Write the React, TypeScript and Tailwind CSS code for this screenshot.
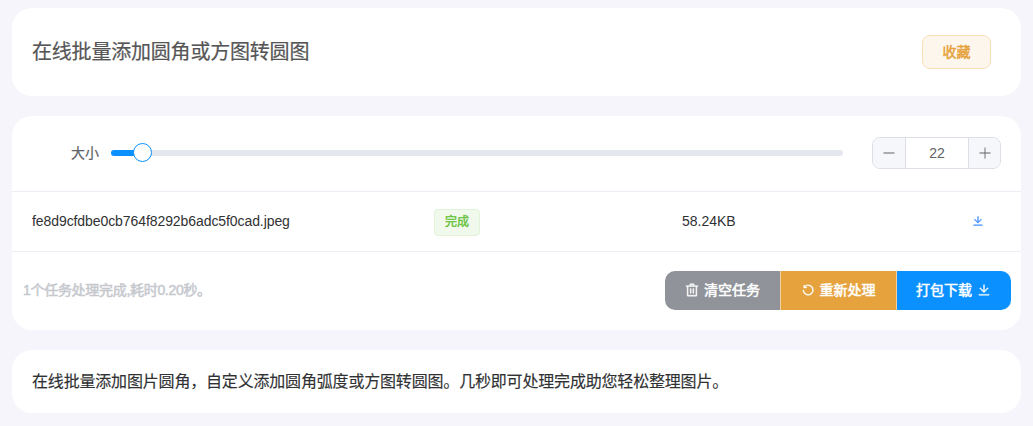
const fontStack = '[font-family:"Liberation_Sans","Noto_Sans_CJK_SC",sans-serif]';

function DownloadIcon({ className }: { className: string }) {
  return (
    <svg viewBox="0 0 1024 1024" fill="currentColor" stroke="currentColor" strokeWidth="36" className={className}>
      <path d="M160 832h704a32 32 0 1 1 0 64H160a32 32 0 1 1 0-64m384-253.696 236.288-236.352 45.248 45.248L508.8 704 192 387.2l45.248-45.248L480 584.704V128h64z" />
    </svg>
  );
}

function DeleteIcon({ className }: { className: string }) {
  return (
    <svg viewBox="0 0 1024 1024" fill="currentColor" stroke="currentColor" strokeWidth="36" className={className}>
      <path d="M160 256H96a32 32 0 0 1 0-64h256V95.936a32 32 0 0 1 32-32h256a32 32 0 0 1 32 32V192h256a32 32 0 1 1 0 64h-64v672a32 32 0 0 1-32 32H192a32 32 0 0 1-32-32zm448-64v-64H416v64zM224 896h576V256H224zm192-128a32 32 0 0 1-32-32V416a32 32 0 0 1 64 0v320a32 32 0 0 1-32 32m192 0a32 32 0 0 1-32-32V416a32 32 0 0 1 64 0v320a32 32 0 0 1-32 32" />
    </svg>
  );
}

function RefreshIcon({ className }: { className: string }) {
  return (
    <svg viewBox="0 0 1024 1024" fill="currentColor" stroke="currentColor" strokeWidth="36" className={className}>
      <path d="M289.088 296.704h92.992a32 32 0 0 1 0 64H232.96a32 32 0 0 1-32-32V179.712a32 32 0 0 1 64 0v50.56a384 384 0 0 1 643.84 282.88 384 384 0 0 1-383.936 384 384 384 0 0 1-384-384h64a320 320 0 1 0 640 0 320 320 0 0 0-555.712-216.448z" />
    </svg>
  );
}

function MinusIcon() {
  return (
    <svg viewBox="0 0 1024 1024" fill="currentColor" className="w-[14px] h-[14px]">
      <path d="M128 544h768a32 32 0 1 0 0-64H128a32 32 0 0 0 0 64" />
    </svg>
  );
}

function PlusIcon() {
  return (
    <svg viewBox="0 0 1024 1024" fill="currentColor" className="w-[14px] h-[14px]">
      <path d="M480 480V128a32 32 0 0 1 64 0v352h352a32 32 0 1 1 0 64H544v352a32 32 0 1 1-64 0V544H128a32 32 0 0 1 0-64z" />
    </svg>
  );
}

export default function App() {
  return (
    <div className={`${fontStack} min-h-[426px] bg-[#f5f5fb] px-3 pt-2 flex flex-col gap-5`}>

      {/* TITLE */}
      <header className="h-[88px] bg-white rounded-[20px] pl-5 pr-[30px] flex items-center justify-between">
        <h1 className="text-xl tracking-[-0.2px] [-webkit-text-stroke:0.2px_currentColor] text-[#555555]">在线批量添加圆角或方图转圆图</h1>
        <button className="w-[69px] h-[34px] rounded-lg border border-[#f8dfb8] bg-[#fdf6ec] text-sm [-webkit-text-stroke:0.5px_currentColor] text-[#e6a23c] flex items-center justify-center">
          收藏
        </button>
      </header>

      {/* TOOL */}
      <section className="h-[214px] bg-white rounded-[20px] flex flex-col">
        <div className="h-[76px] border-b border-[#ebeef5] flex items-center pl-[59px] pr-5 pb-[2px]">
          <span className="w-10 text-sm [-webkit-text-stroke:0.2px_currentColor] text-[#606266]">大小</span>
          <div className="w-[732px] h-[6px] rounded-full bg-[#e4e7ed] relative">
            <div className="w-[31px] h-[6px] rounded-l-full bg-[#0a90ff]" />
            <div className="absolute left-[22px] -top-[7px] w-[19px] h-[19px] rounded-full border border-[#0a90ff] bg-white" />
          </div>
          <div className="ml-[29px] w-[129px] h-8 rounded-lg border border-[#dcdfe6] flex items-stretch overflow-hidden text-[#606266]">
            <div className="w-[33px] bg-[#f5f7fa] border-r border-[#dcdfe6] flex items-center justify-center">
              <MinusIcon />
            </div>
            <div className="flex-1 flex items-center justify-center text-sm">22</div>
            <div className="w-[32px] bg-[#f5f7fa] border-l border-[#dcdfe6] flex items-center justify-center">
              <PlusIcon />
            </div>
          </div>
        </div>

        <div className="h-[60px] border-b border-[#ebeef5] grid grid-cols-[402px_248px_1fr_auto] items-center pl-5 pr-[37px] text-sm text-[#303133]">
          <span className="-mt-[2px] tracking-[-0.08px] whitespace-nowrap">fe8d9cfdbe0cb764f8292b6adc5f0cad.jpeg</span>
          <span className="w-[46px] h-[27px] mt-[1px] rounded-[4px] border border-[#e1f3d8] bg-[#f0f9eb] text-xs [-webkit-text-stroke:0.4px_currentColor] text-[#67c23a] flex items-center justify-center">
            完成
          </span>
          <span className="-mt-[2px]">58.24KB</span>
          <DownloadIcon className="w-3 h-3 text-[#3f8cff] -mt-[2px]" />
        </div>

        <div className="flex-1 flex items-center justify-between pl-[11px] pr-[10px] pb-[2px]">
          <span className="text-sm tracking-[-0.3px] [-webkit-text-stroke:0.5px_currentColor] text-[#c6c8ce]">1个任务处理完成,耗时0.20秒。</span>
          <div className="flex h-[39px] text-sm [-webkit-text-stroke:0.5px_currentColor] text-white">
            <button className="w-[115px] rounded-l-[10px] bg-[#909399] flex items-center justify-center gap-[5px]">
              <DeleteIcon className="w-[14px] h-[14px]" />
              清空任务
            </button>
            <button className="w-[116px] pr-[1px] border-l border-[#f3d19e] bg-[#e6a23c] flex items-center justify-center gap-[5px]">
              <RefreshIcon className="w-[14px] h-[14px]" />
              重新处理
            </button>
            <button className="w-[115px] pr-[1px] rounded-r-[10px] border-l border-[#f3d19e] bg-[#0a90ff] flex items-center justify-center gap-[5px]">
              打包下载
              <DownloadIcon className="w-[14px] h-[14px]" />
            </button>
          </div>
        </div>
      </section>

      {/* DESCRIPTION */}
      <section className="h-[63px] bg-white rounded-[20px] px-5 flex items-center">
        <p className="text-base tracking-[-0.18px] [-webkit-text-stroke:0.15px_currentColor] text-[#303133]">在线批量添加图片圆角，自定义添加圆角弧度或方图转圆图。几秒即可处理完成助您轻松整理图片。</p>
      </section>
    </div>
  );
}
